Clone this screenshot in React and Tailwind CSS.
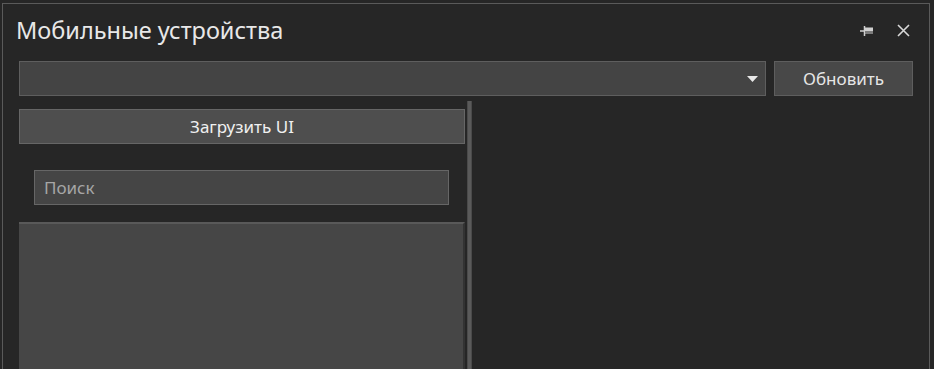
import React from "react";

function PinIcon() {
  return (
    <svg width="14" height="12" viewBox="0 0 14 12" className="block">
      <line x1="0" y1="6" x2="4" y2="6" stroke="#d0d0d0" strokeWidth="1.5" />
      <line x1="4.5" y1="1" x2="4.5" y2="11" stroke="#d0d0d0" strokeWidth="1.5" />
      <rect x="5" y="2.5" width="8" height="6" fill="#d0d0d0" />
      <line x1="5" y1="7" x2="13" y2="7" stroke="#262626" strokeWidth="1" />
    </svg>
  );
}

function CloseIcon() {
  return (
    <svg width="13" height="13" viewBox="0 0 13 13" className="block">
      <path d="M1 1 L12 12 M12 1 L1 12" stroke="#d8d8d8" strokeWidth="1.6" fill="none" />
    </svg>
  );
}

export default function App() {
  return (
    <div
      className="w-[934px] h-[369px] bg-[#262626] overflow-hidden pl-[2px] pt-[3px] text-[#e6e6e6]"
      style={{ fontFamily: '"Noto Sans", "Open Sans", sans-serif' }}
    >
      <div className="w-[928px] h-[366px] border border-b-0 border-[#5a5a5a] flex flex-col">
        {/* header */}
        <div className="h-[57px] flex items-center pl-[13px] pr-[19px] shrink-0">
          <div className="text-[23.5px] leading-none text-[#e8e8e8] pb-[3px]">Мобильные устройства</div>
          <div className="ml-auto flex items-center gap-[23px] pb-[4px]">
            <PinIcon />
            <CloseIcon />
          </div>
        </div>
        {/* combo row */}
        <div className="flex pl-[16px] pr-[16px] gap-[8px] shrink-0">
          <div className="flex-1 h-[35px] bg-[#444444] border border-[#5e5e5e] flex items-center justify-end pr-[7px]">
            <svg width="11" height="6" viewBox="0 0 11 6"><path d="M0 0 H11 L5.5 6 Z" fill="#e8e8e8" /></svg>
          </div>
          <div className="w-[139px] h-[35px] bg-[#484848] border border-[#5e5e5e] flex items-center justify-center text-[17px] text-[#e6e6e6] pt-[1px]">
            Обновить
          </div>
        </div>
        {/* main */}
        <div className="flex flex-1 mt-[5px] pl-[16px] min-h-0">
          <div className="w-[446px] flex flex-col pt-[8px]">
            <div className="h-[35px] bg-[#4e4e4e] border border-[#666] flex items-center justify-center text-[17px] text-[#f0f0f0]">
              Загрузить UI
            </div>
            <div className="pt-[26px] pl-[15px] pr-[16px]">
              <div className="h-[35px] bg-[#454545] border border-[#666] flex items-center pl-[9px] text-[17px] text-[#a6a6a6]">
                Поиск
              </div>
            </div>
            <div className="mt-[17px] flex-1 bg-[#464646] border-t-2 border-t-[#595959] border-r-2 border-r-[#333]"></div>
          </div>
          <div className="ml-[2px] w-[5px] bg-[#5a5a5a] border-x border-[#4a4a4a]"></div>
          <div className="flex-1"></div>
        </div>
      </div>
    </div>
  );
}
